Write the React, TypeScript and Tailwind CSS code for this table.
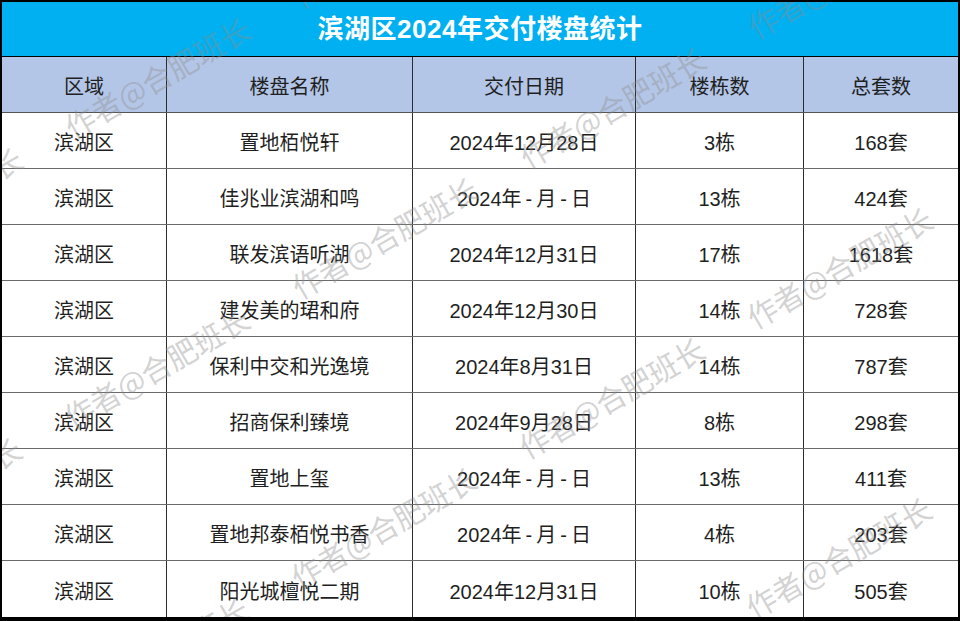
import React from "react";

const rows = [
  ["滨湖区", "置地栢悦轩", "2024年12月28日", "3栋", "168套"],
  ["滨湖区", "佳兆业滨湖和鸣", "2024年\u2009-\u2009月\u2009-\u2009日", "13栋", "424套"],
  ["滨湖区", "联发滨语听湖", "2024年12月31日", "17栋", "1618套"],
  ["滨湖区", "建发美的珺和府", "2024年12月30日", "14栋", "728套"],
  ["滨湖区", "保利中交和光逸境", "2024年8月31日", "14栋", "787套"],
  ["滨湖区", "招商保利臻境", "2024年9月28日", "8栋", "298套"],
  ["滨湖区", "置地上玺", "2024年\u2009-\u2009月\u2009-\u2009日", "13栋", "411套"],
  ["滨湖区", "置地邦泰栢悦书香", "2024年\u2009-\u2009月\u2009-\u2009日", "4栋", "203套"],
  ["滨湖区", "阳光城檀悦二期", "2024年12月31日", "10栋", "505套"],
];

const headers = ["区域", "楼盘名称", "交付日期", "楼栋数", "总套数"];
const cols = "grid grid-cols-[165px_246px_223px_168px_1fr]";

// watermark tiles on a skewed lattice
const marks: { x: number; y: number }[] = [];
for (let i = -2; i <= 4; i++) {
  for (let j = -3; j <= 4; j++) {
    const x = 155 + 227 * i - 228 * j;
    const y = 75 + 160 * i + 130 * j;
    if (x > -200 && x < 1160 && y > -120 && y < 740) marks.push({ x, y });
  }
}

function Row({ cells, head, last }: { cells: string[]; head?: boolean; last?: boolean }) {
  return (
    <div
      className={`${cols} h-[56px] ${last ? "" : "border-b"} ${
        head ? "bg-[#b4c6e7] border-[#555]" : "bg-white border-[#6b6b6b]"
      }`}
    >
      {cells.map((c, i) => (
        <div
          key={i}
          className={`flex items-center justify-center pt-[5px] text-[20px] text-[#1f1f1f] ${
            i < cells.length - 1 ? "border-r border-[#2b2b2b]" : ""
          }`}
        >
          {c}
        </div>
      ))}
    </div>
  );
}

export default function App() {
  return (
    <div
      className="relative w-[960px] h-[621px] overflow-hidden bg-white border-2 border-b-4 border-black"
      style={{ fontFamily: '"Liberation Sans", "Noto Sans CJK SC", sans-serif' }}
    >
      <div className="h-[55px] bg-[#00b0f0] border-b border-black flex items-center justify-center">
        <h1 className="text-[26px] font-bold text-white tracking-[0.5px]">滨湖区2024年交付楼盘统计</h1>
      </div>
      <Row cells={headers} head />
      {rows.map((r, i) => (
        <Row key={i} cells={r} last={i === rows.length - 1} />
      ))}

      <div className="pointer-events-none absolute inset-0">
        {marks.map((m, i) => (
          <span
            key={i}
            className="absolute whitespace-nowrap text-[30px] leading-none text-[rgba(140,140,140,0.4)] -translate-x-1/2 -translate-y-1/2 -rotate-30"
            style={{ left: m.x, top: m.y, fontFamily: '"Noto Sans CJK SC", sans-serif' }}
          >
            作者@合肥班长
          </span>
        ))}
      </div>
    </div>
  );
}
